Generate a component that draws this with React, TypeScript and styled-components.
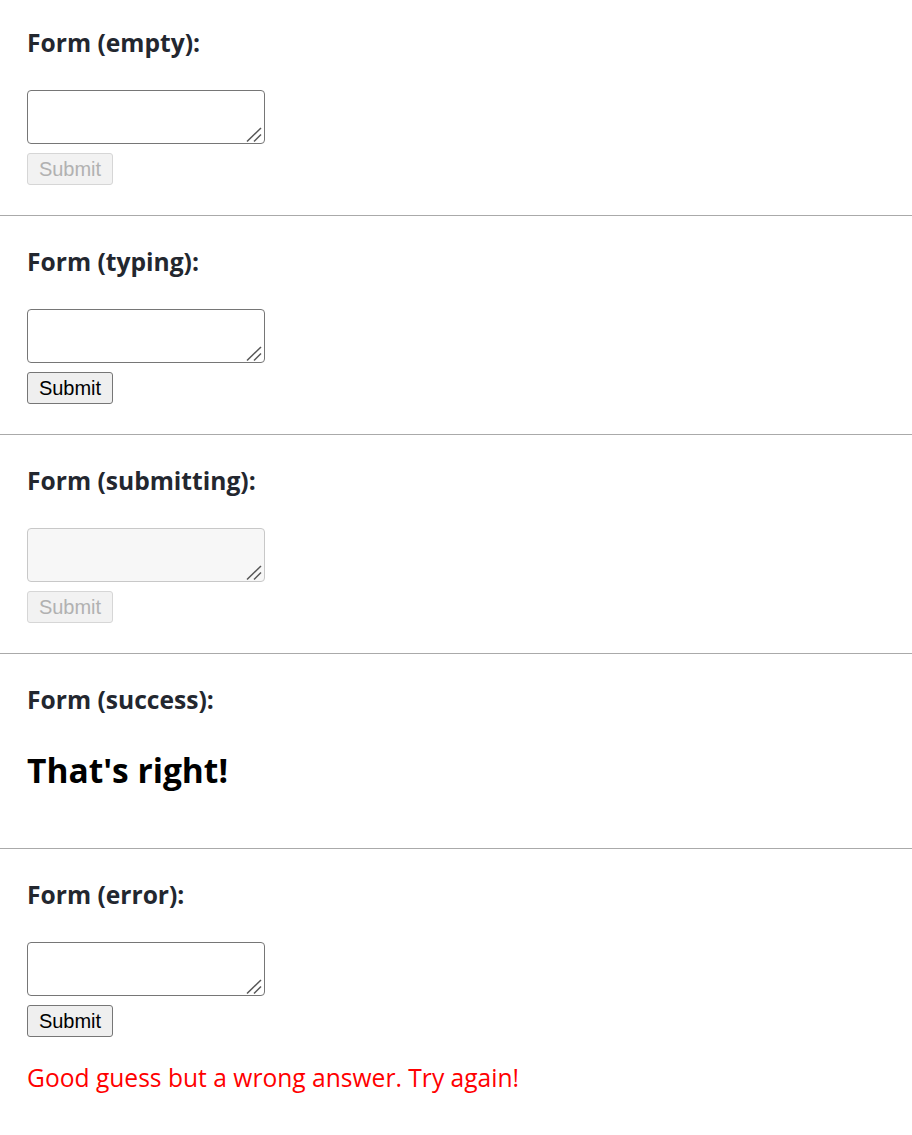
import React from "react";
import styled, { createGlobalStyle } from "styled-components";

const Global = createGlobalStyle`
  * { box-sizing: border-box; }
  body {
    margin: 0;
    padding: 0;
    background: #fff;
    font-family: "Open Sans", "Noto Sans", "DejaVu Sans", sans-serif;
    color: #23272f;
  }
`;

const Section = styled.section`
  padding: 30px 27px 30px;
  border-bottom: 1px solid #aaa;
  &:first-of-type {
    padding-top: 27px;
  }
`;

const Heading = styled.h4`
  margin: 0 0 31px;
  font-size: 24.6px;
  line-height: 32px;
  font-weight: 700;
  color: #23272f;
`;

const FormBox = styled.form`
  display: flex;
  flex-direction: column;
  align-items: flex-start;
  margin: 0;
`;

const AreaWrap = styled.div`
  position: relative;
  width: 238px;
  height: 54px;
`;

const Area = styled.textarea<{ $off?: boolean }>`
  display: block;
  width: 238px;
  height: 54px;
  margin: 0;
  padding: 3px;
  resize: none;
  border: 1px solid ${(p) => (p.$off ? "#c8c8c8" : "#767676")};
  border-radius: 4px;
  background: ${(p) => (p.$off ? "#f7f7f7" : "#fff")};
  font-family: "Liberation Mono", monospace;
  font-size: 20px;
  outline: none;
`;

const Grip = styled.svg`
  position: absolute;
  right: 1px;
  bottom: 1px;
  width: 18px;
  height: 17px;
  pointer-events: none;
`;

const SubmitButton = styled.button`
  margin-top: 9px;
  width: 86px;
  height: 32px;
  padding: 0;
  font-family: "Liberation Sans", Arial, sans-serif;
  font-size: 20px;
  color: #000;
  background: #efefef;
  border: 1px solid #767676;
  border-radius: 3px;
  &:disabled {
    color: #b1b1b1;
    background: #f2f2f2;
    border-color: #d6d6d6;
  }
`;

const Success = styled.h1`
  margin: 0 0 25px;
  font-size: 33.5px;
  line-height: 46px;
  font-weight: 700;
  color: #000;
`;

const ErrorText = styled.p`
  margin: 25px 0 24px;
  font-size: 24.6px;
  line-height: 32px;
  color: red;
`;

type Status = "empty" | "typing" | "submitting" | "success" | "error";

function Form({ status }: { status: Status }) {
  if (status === "success") {
    return <Success>That's right!</Success>;
  }
  const off = status === "submitting";
  return (
    <FormBox onSubmit={(e) => e.preventDefault()}>
      <AreaWrap>
        <Area disabled={off} $off={off} />
        <Grip viewBox="0 0 18 17">
          <line x1="1" y1="15.5" x2="15" y2="2" stroke="#555" strokeWidth="1.5" />
          <line x1="8" y1="15.5" x2="15" y2="8.5" stroke="#555" strokeWidth="1.5" />
        </Grip>
      </AreaWrap>
      <SubmitButton disabled={status === "empty" || status === "submitting"}>
        Submit
      </SubmitButton>
      {status === "error" && (
        <ErrorText>Good guess but a wrong answer. Try again!</ErrorText>
      )}
    </FormBox>
  );
}

const statuses: Status[] = ["empty", "typing", "submitting", "success", "error"];

export default function App() {
  return (
    <>
      <Global />
      {statuses.map((s) => (
        <Section key={s}>
          <Heading>Form ({s}):</Heading>
          <Form status={s} />
        </Section>
      ))}
    </>
  );
}
